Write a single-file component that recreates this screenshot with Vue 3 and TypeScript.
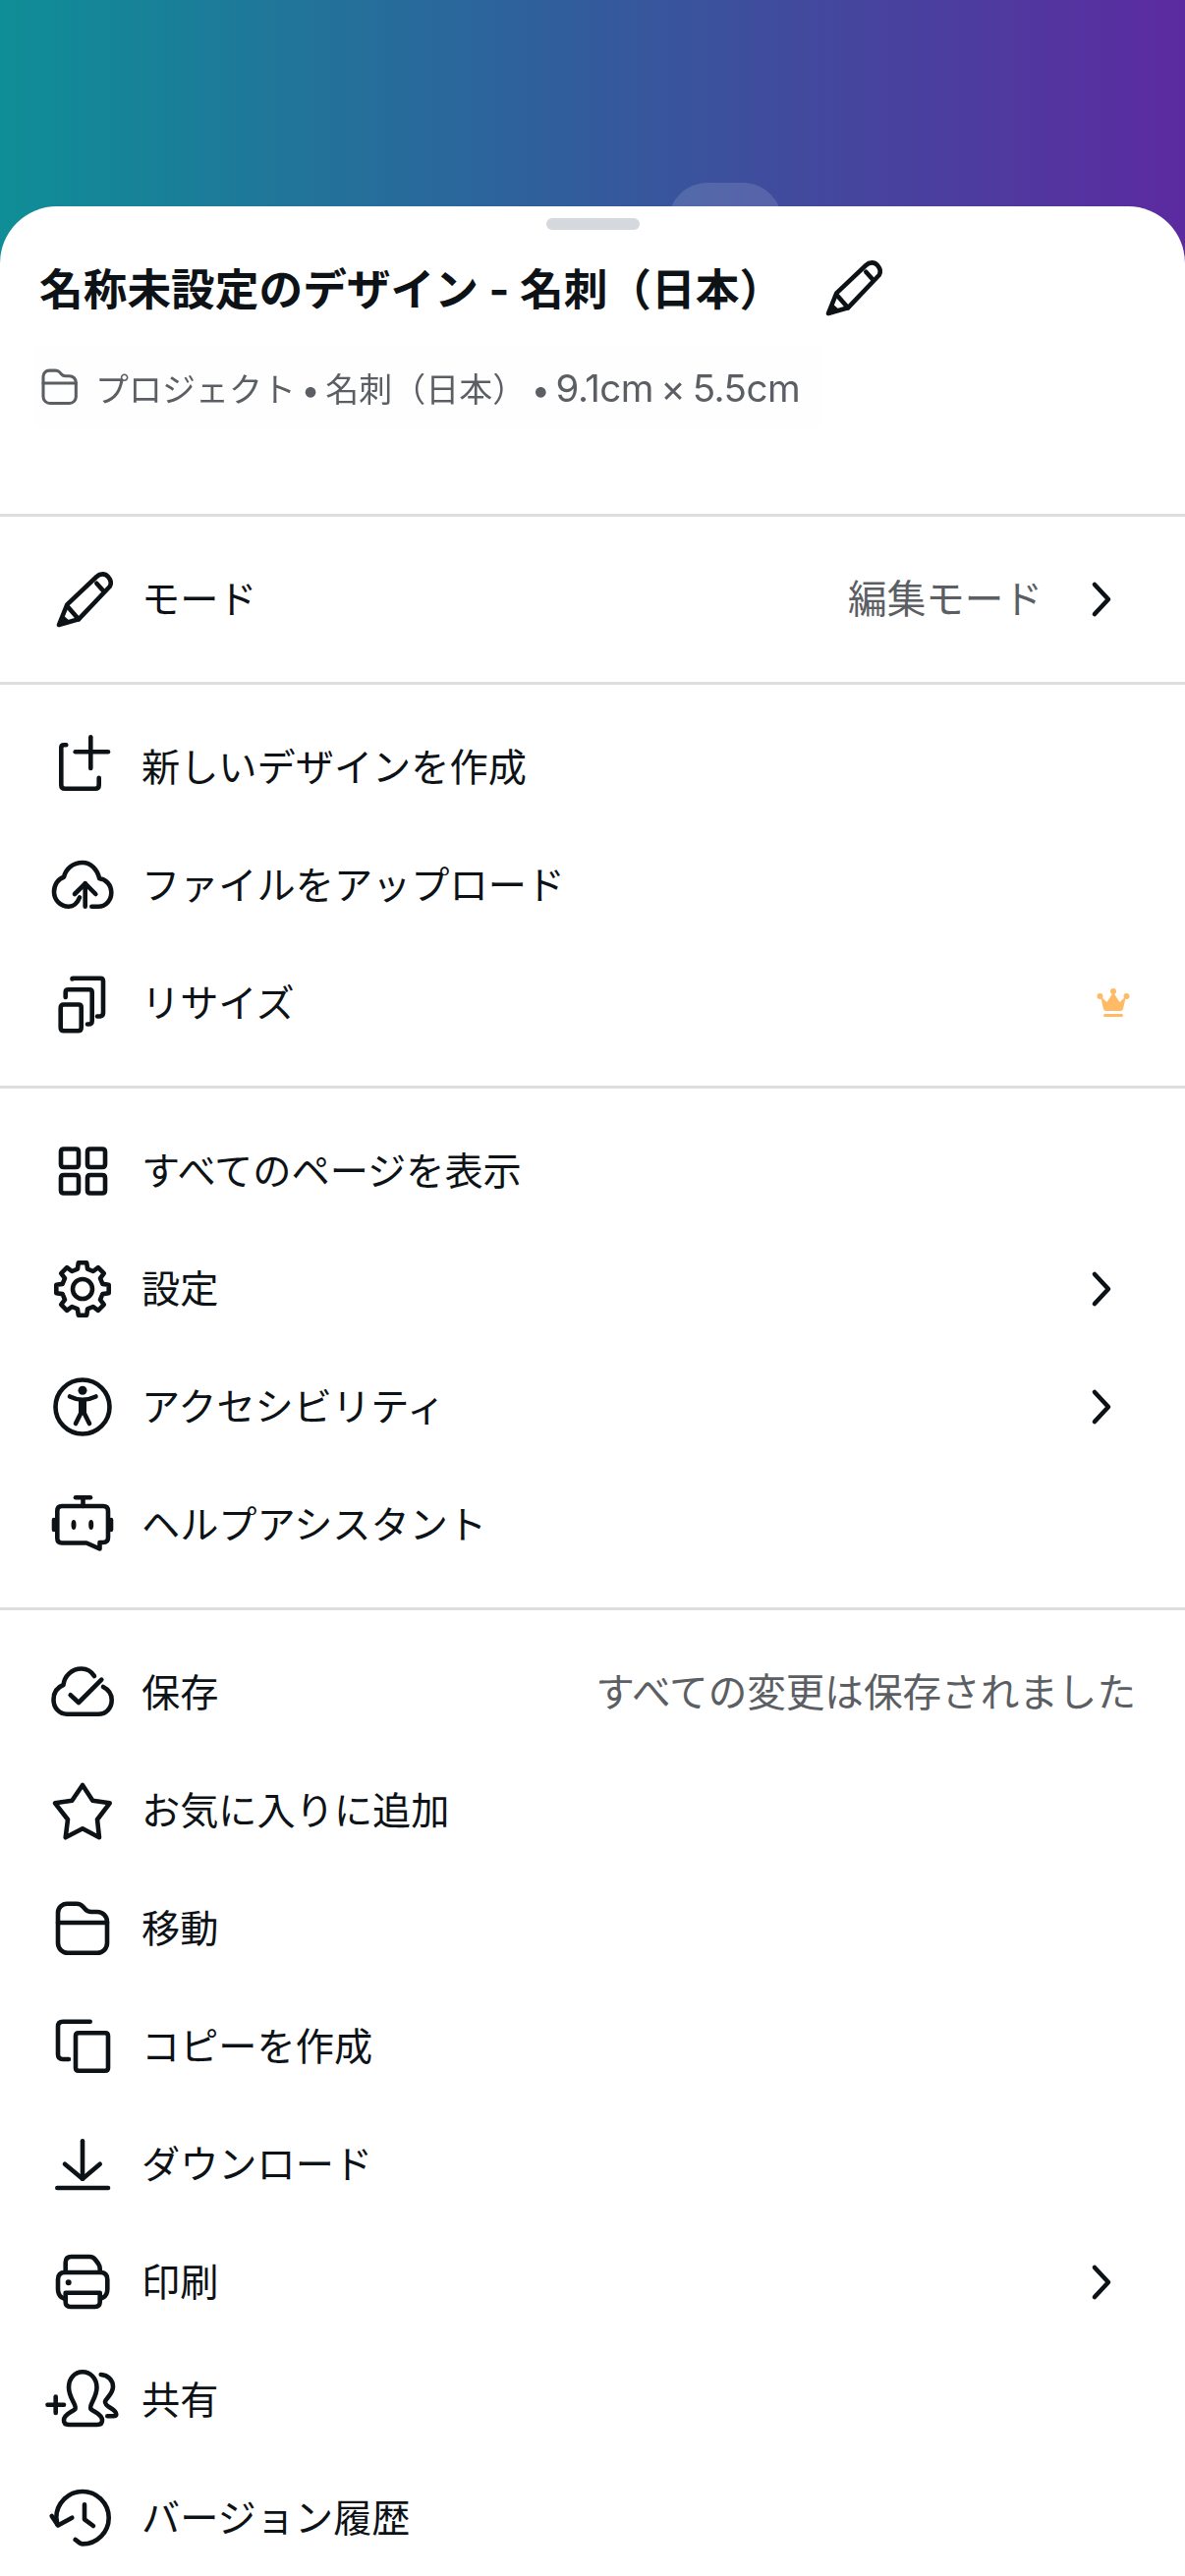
<template>
  <div class="screen">
    <div class="ghost-tab"></div>
    <div class="sheet">
      <div class="handle"></div>

      <!-- Title -->
      <div class="title-row">
        <h1>名称未設定のデザイン - 名刺（日本）</h1>
        <svg class="icon title-pencil" viewBox="0 0 72 72">
          <path v-for="d in pencil" :key="d" :d="d" />
          <path class="solid" :d="pencilTip" />
        </svg>
      </div>
      <div class="meta">
        <svg class="icon meta-folder" viewBox="0 0 72 72">
          <path v-for="d in folder" :key="d" :d="d" />
        </svg>
        <span>プロジェクト • 名刺（日本） • <span class="size">9.1cm × 5.5cm</span></span>
      </div>

      <!-- Menu -->
      <section v-for="(group, g) in groups" :key="g" class="group">
        <div v-for="item in group" :key="item.label" class="row">
          <svg class="icon" viewBox="0 0 72 72">
            <path v-for="d in item.paths" :key="d" :d="d" />
            <path v-for="d in item.fills || []" :key="d" class="solid" :d="d" />
          </svg>
          <span class="label">{{ item.label }}</span>
          <span v-if="item.value" class="value">{{ item.value }}</span>
          <svg v-if="item.chevron" class="chevron" viewBox="0 0 40 40">
            <path d="M13 5 L27 20 L13 35" />
          </svg>
          <svg v-if="item.crown" class="crown" viewBox="0 0 34 30">
            <circle cx="3.500" cy="8" r="3" />
            <circle cx="17" cy="3" r="3" />
            <circle cx="30.500" cy="8" r="3" />
            <path d="M4 8 L10.500 14 L17 4 L23.500 14 L30 8 L27 21 Q26.500 23 24.500 23 L9.500 23 Q7.500 23 7 21 Z" />
            <rect x="7" y="26" width="20" height="3" rx="1.500" />
          </svg>
        </div>
      </section>
    </div>
  </div>
</template>

<script setup lang="ts">
interface MenuItem {
  label: string
  paths: string[]
  fills?: string[]
  value?: string
  chevron?: boolean
  crown?: boolean
}

const ring = (cx: number, cy: number, r: number) =>
  `M${cx - r} ${cy} a${r} ${r} 0 1 0 ${r * 2} 0 a${r} ${r} 0 1 0 ${-r * 2} 0 Z`

const gear = (cx: number, cy: number) => {
  const pts: string[] = []
  for (let i = 0; i < 8; i++) {
    const a = i * 45 - 90
    for (const [off, r] of [[-14, 21], [-9, 27], [9, 27], [14, 21]]) {
      const t = ((a + off) * Math.PI) / 180
      pts.push(`${(cx + r * Math.cos(t)).toFixed(1)} ${(cy + r * Math.sin(t)).toFixed(1)}`)
    }
  }
  return `M${pts.join(' L')} Z`
}

const pencil = [
  'M13 62 L21.300 41.300 L51.300 13 C55 9.500 60 9.500 63 13 C66 16.500 66.500 20 64.700 23 L33 56.300 Z',
  'M51.300 19.700 L58 27.300',
  'M22.300 44 L33 56.300',
]
const pencilTip = 'M12 64 L16 51 L25 59 Z'

const folder = [
  'M12 30 V20 a9.300 9.300 0 0 1 9.300 -9.300 H31 q4 0 6.500 3 l2 2.300 q2.500 3 6.500 3 H52 a10 10 0 0 1 10 10 V50.700 a10 10 0 0 1 -10 10 H22 a10 10 0 0 1 -10 -10 Z',
  'M12 30 H62',
]

const groups: MenuItem[][] = [
  [
    { label: 'モード', paths: pencil, fills: [pencilTip], value: '編集モード', chevron: true },
  ],
  [
    {
      label: '新しいデザインを作成',
      paths: ['M20.300 13.300 H18 q-2.700 0 -2.700 2.700 V54 q0 3.700 3.700 3.700 H50 q3.700 0 3.700 -3.700 V46.700', 'M45.300 5.300 V37', 'M29.700 20.300 H63'],
    },
    {
      label: 'ファイルをアップロード',
      paths: [
        'M46.300 57.700 H53 C61 57.700 66.300 51 66.300 43.500 C66.300 35.500 60.500 29.800 54.200 29.300 C52 20 45.500 13 37 13 C27 13 20 19.500 18 27.700 C12 29.500 8 35.500 8 42.700 C8 51 14.500 57.700 23 57.700 C28.500 57.700 32 53.500 34 48.500',
        'M39.700 34.300 V57.700',
        'M29 45 L39.700 34.300 L50.300 45',
      ],
    },
    {
      label: 'リサイズ',
      crown: true,
      paths: [
        'M18 37.500 H33 q2.700 0 2.700 2.700 V61 q0 3.300 -3.300 3.300 H18 q-3.300 0 -3.300 -3.300 V40.800 q0 -3.300 3.300 -3.300 Z',
        'M19.700 30 V25 q0 -2.700 2.700 -2.700 H44 q2.700 0 2.700 2.700 V54 q0 3.500 -3.500 3.500 H42',
        'M26.500 11.500 q0 -0.700 0.700 -0.700 H55 q3 0 3 3 V46 q0 3 -3 3.500 H52',
      ],
    },
  ],
  [
    {
      label: 'すべてのページを表示',
      paths: [
        'M18 13.500 H30 q3 0 3 3 V29 q0 3 -3 3 H18 q-3 0 -3 -3 V16.500 q0 -3 3 -3 Z',
        'M45 13.500 H57 q3 0 3 3 V29 q0 3 -3 3 H45 q-3 0 -3 -3 V16.500 q0 -3 3 -3 Z',
        'M18 40 H30 q3 0 3 3 V55.500 q0 3 -3 3 H18 q-3 0 -3 -3 V43 q0 -3 3 -3 Z',
        'M45 40 H57 q3 0 3 3 V55.500 q0 3 -3 3 H45 q-3 0 -3 -3 V43 q0 -3 3 -3 Z',
      ],
    },
    { label: '設定', paths: [gear(37, 36), ring(37, 36, 10)], chevron: true },
    {
      label: 'アクセシビリティ',
      chevron: true,
      paths: [ring(37, 36, 27.5), 'M24 25.500 Q37 32 50.500 25.500', 'M37 30 V41', 'M37 39 L30 53', 'M37 39 L44 53'],
      fills: [ring(37, 19.300, 4.500), 'M33 29 H41 V42 H33 Z'],
    },
    {
      label: 'ヘルプアシスタント',
      paths: [
        'M16 17 H58 q5 0 5 5 V49 q0 5 -5 5 H54.500 V60.500 L41 54.500 H16 q-4.700 0 -4.700 -5 V22 q0 -5 4.700 -5 Z',
        'M30 8.300 H45',
        'M37.500 8.300 V17',
        'M8 31 V41',
        'M66 31 V41',
      ],
      fills: ['M25.500 36 a2.500 5 0 1 0 5 0 a2.500 5 0 1 0 -5 0 Z', 'M43.200 36 a2.500 5 0 1 0 5 0 a2.500 5 0 1 0 -5 0 Z'],
    },
  ],
  [
    {
      label: '保存',
      paths: [
        'M49 19 C45.500 13.500 41 11.500 36 11.500 C26 11.500 18.500 19 17.500 28 C11 30.500 7.500 36 7.500 43 C7.500 51.500 13.500 57.700 21 57.700 H53 C60.500 57.700 66.700 52 66.700 43.500 C66.700 37 63 32.500 58 30',
        'M24.700 38.300 L33 46 L56.300 22.700',
      ],
      value: 'すべての変更は保存されました',
    },
    {
      label: 'お気に入りに追加',
      paths: ['M37 10 L47.300 25.700 L64.700 28.300 L52 45 L54 63.300 L37 54.300 L19.700 63.300 L22 45 L9 28.300 L26.300 25.700 Z'],
    },
    { label: '移動', paths: folder },
    {
      label: 'コピーを作成',
      paths: [
        'M33 22.300 H60 q3 0 3 3 V57.700 q0 3 -3 3 H33 q-3 0 -3 -3 V25.300 q0 -3 3 -3 Z',
        'M44.700 10.700 V10.700 H17 q-5 0 -5 5 V44 q0 5 5 5 H23',
      ],
    },
    {
      label: 'ダウンロード',
      paths: ['M37 12.300 V50.700', 'M19 35.700 L37 50.700 L54.700 35.700', 'M11.300 60 H63'],
    },
    {
      label: '印刷',
      chevron: true,
      paths: [
        'M19.700 24 V16 q0 -6 6 -6 H44 q4 0 6 3 l3 4 q1.700 2.500 1.700 5 V24',
        'M19 26 H55 q7.300 0 7.300 7.300 V43 q0 6 -4.300 8.500 L55 53 M19 53 L16 51.500 Q12 49 12 43 V33.300 Q12 26 19 26',
        'M19.700 46.700 H54.700 V56 q0 5 -5 5 H24.700 q-5 0 -5 -5 Z',
      ],
      fills: [ring(22.700, 36.300, 3)],
    },
    {
      label: '共有',
      paths: [
        'M23 61 H52 q5 0 5 -4.500 C57 50 48 48 45.500 45 C43 41 51.500 34 51.500 23 C51.500 14 45 7.300 37 7.300 C29 7.300 23 14 23 23 C23 34 31.500 41 29.500 45 C27 48 18 50 18 56.500 Q18 61 23 61 Z',
        'M55.700 10 C63 10.500 68 15.500 68 22.300 C68 30 61 33.500 60 37.500 C59.500 43.500 71.300 44.500 71.300 50.500 Q71.300 52.300 68 52.300 H62.300',
        'M1.500 40.700 H18',
        'M9.700 32.500 V49',
      ],
    },
    {
      label: 'バージョン履歴',
      paths: [
        'M29.700 58 C32 59.500 34.500 62.400 37 62.400 C51.700 62.400 63.700 50.400 63.700 35.700 C63.700 21 51.700 9 37 9 C22.300 9 10.300 21 10.300 35.700 L11.300 42.300',
        'M5.700 34 L12 43.500 L26.300 35.700',
        'M39 22.300 V37.300 L48 44',
      ],
    },
  ],
]
</script>

<style>
html,
body {
  background: #fff;
}
</style>

<style scoped>
.screen {
  position: relative;
  width: 1206px;
  height: 2622px;
  overflow: hidden;
  padding-top: 210px;
  box-sizing: border-box;
  background: linear-gradient(90deg, #0f8e97 0%, #2f609c 45%, #5c2aa0 100%);
  font-family: Inter, "Noto Sans CJK JP", sans-serif;
  color: #0d1216;
}

.ghost-tab {
  position: absolute;
  left: 680px;
  top: 186px;
  width: 116px;
  height: 60px;
  border-radius: 40px 40px 0 0;
  background: rgba(255, 255, 255, 0.13);
}

.sheet {
  position: relative;
  height: 100%;
  background: #fff;
  border-radius: 58px 58px 0 0;
  padding-top: 12px;
}

.handle {
  width: 95px;
  height: 12px;
  margin: 0 auto;
  border-radius: 6px;
  background: #d5d8dc;
}

.title-row {
  display: flex;
  align-items: center;
  height: 72px;
  margin-top: 25px;
  padding-left: 40px;
}

h1 {
  margin: 0;
  font-size: 44.7px;
  line-height: 72px;
  font-weight: 700;
  white-space: nowrap;
}

.title-pencil {
  margin-left: 33px;
  margin-top: -4px;
}

.meta {
  display: flex;
  align-items: center;
  gap: 13px;
  width: 800px;
  height: 84px;
  margin: 21px 0 87px 36px;
  background: #fefefe;
  color: #5b5e63;
  font-size: 34px;
  word-spacing: -4px;
  white-space: nowrap;
  filter: blur(0.5px);
}

.size {
  font-size: 38.5px;
  letter-spacing: -0.5px;
  word-spacing: -3px;
}

.group {
  border-top: 3px solid #dcdee0;
  padding: 24px 0;
}

.row {
  display: flex;
  align-items: center;
  height: 120px;
  padding: 0 50px 0 47px;
}

.icon {
  flex: none;
  width: 72px;
  height: 72px;
  fill: none;
  stroke: #0d1216;
  stroke-width: 4.6;
  stroke-linecap: round;
  stroke-linejoin: round;
  overflow: visible;
}

.meta .meta-folder {
  width: 48px;
  height: 48px;
  stroke: #5b5e63;
}

.solid {
  fill: #0d1216;
  stroke: none;
}

.label {
  margin-left: 25px;
  font-size: 39.2px;
  line-height: 56px;
  white-space: nowrap;
}

.value {
  margin-left: auto;
  font-size: 39.6px;
  line-height: 56px;
  color: #5b5e63;
  white-space: nowrap;
}

.chevron {
  flex: none;
  width: 40px;
  height: 40px;
  margin-left: 40px;
  margin-right: 15px;
  fill: none;
  stroke: #0d1216;
  stroke-width: 4.6;
  stroke-linecap: round;
  stroke-linejoin: round;
}

.label + .chevron {
  margin-left: auto;
}

.crown {
  flex: none;
  width: 34px;
  height: 30px;
  margin-left: auto;
  margin-right: 6px;
  fill: #ffba66;
}
</style>
